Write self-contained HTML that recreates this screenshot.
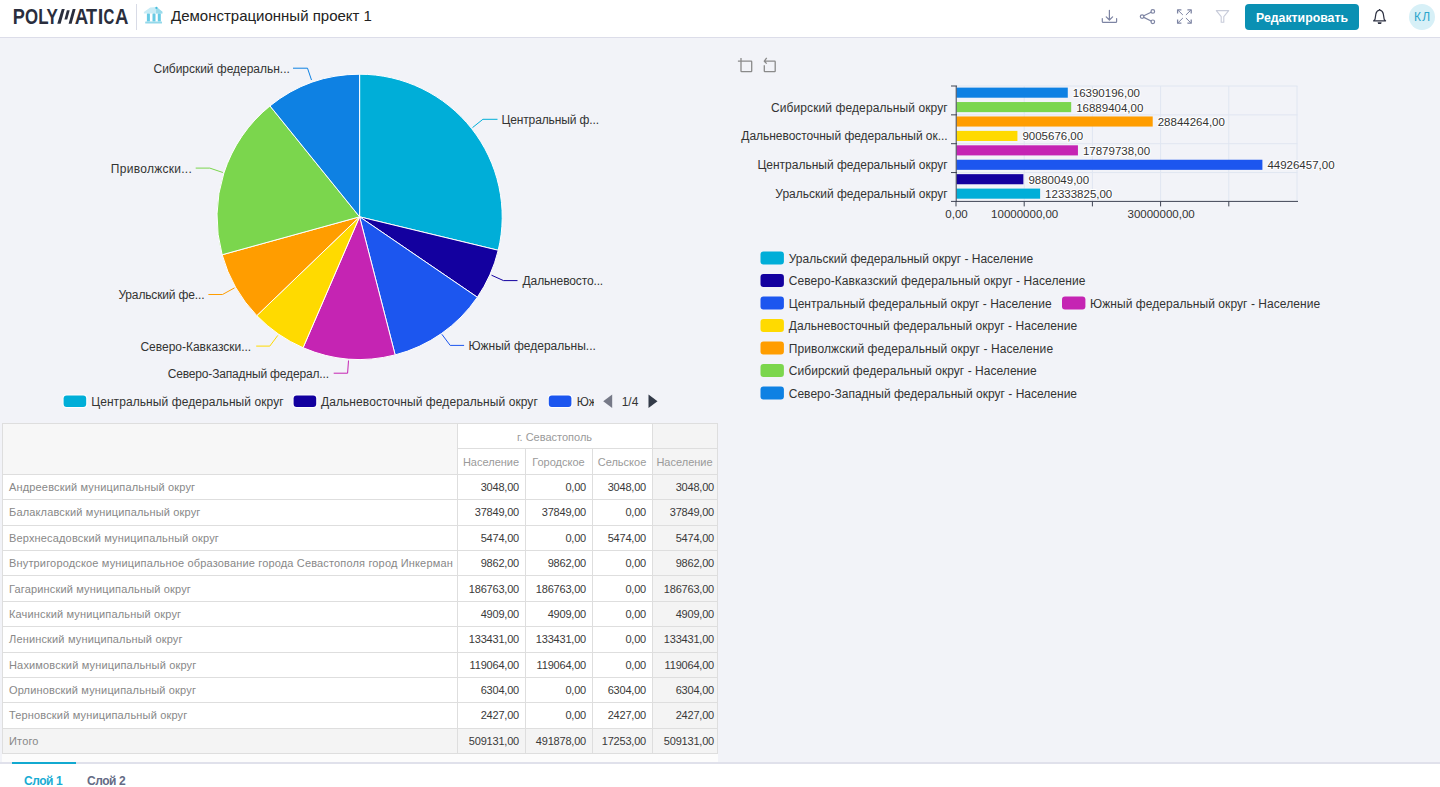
<!DOCTYPE html>
<html><head><meta charset="utf-8"><style>
html,body{margin:0;padding:0;width:1440px;height:787px;overflow:hidden;background:#f2f3f8;font-family:"Liberation Sans", sans-serif}
.abs{position:absolute}
.pl{font-size:12px;fill:#333}
.bv{font-size:11.5px;fill:#333;paint-order:stroke;stroke:#fff;stroke-width:2px;stroke-linejoin:round}
.bl{font-size:12px;fill:#333}
.lg{font-size:12px;fill:#333}
.th{font-size:11px;color:#9a9a9a;white-space:nowrap}
.tl{font-size:11px;letter-spacing:0.16px;color:#888;white-space:nowrap}
.tv{font-size:11px;letter-spacing:-0.2px;color:#3a3a3a;white-space:nowrap}
</style></head><body>
<div class="abs" style="left:0;top:0;width:1440px;height:37px;background:#fff"></div>
<div class="abs" style="left:0;top:37px;width:1440px;height:1px;background:#dcdde9"></div>
<svg class="abs" style="left:0;top:0" width="200" height="37" viewBox="0 0 200 37">
<g fill="#2a2e3d" font-family="Liberation Sans" font-weight="bold" font-size="21.44">
<text transform="translate(12.75,23.75) scale(0.844,1)">P</text>
<text transform="translate(25.11,23.75) scale(0.785,1)">O</text>
<text transform="translate(38.27,23.75) scale(0.791,1)">L</text>
<text transform="translate(46.61,23.75) scale(0.795,1)">Y</text>
<text transform="translate(74.74,23.75) scale(0.869,1)">A</text>
<text transform="translate(86.05,23.75) scale(0.843,1)">T</text>
<text transform="translate(97.65,23.75) scale(0.939,1)">I</text>
<text transform="translate(103.59,23.75) scale(0.699,1)">C</text>
<text transform="translate(114.94,23.75) scale(0.869,1)">A</text>
</g>
<path d="M61.8,9H64.7L60.6,23.75H57.3Z" fill="#2a2e3d"/>
<path d="M66.9,10.2H69.7L67.2,19.4H64.4Z" fill="#2a2e3d"/>
<path d="M72.7,9H75.6L71.6,23.75H68.6Z" fill="#2a2e3d"/>
<rect x="136" y="4" width="1" height="26" fill="#dfe1ea"/>
<path d="M150.2,7.6L157,7L162.4,11.8V13.4H143.9V12Z" fill="#c8ecf6"/>
<path d="M156.2,7.1L162.4,11.8V13.4H156Z" fill="#9adbeb"/>
<circle cx="156.4" cy="7.9" r="1.1" fill="#47bcdc"/>
<rect x="146.9" y="13.4" width="3" height="8.2" rx="0.6" fill="#68cbe5"/>
<rect x="152.5" y="13.4" width="3" height="8.2" rx="0.6" fill="#68cbe5"/>
<rect x="157.8" y="13.4" width="3" height="8.2" rx="0.6" fill="#68cbe5"/>
<rect x="145.2" y="21.4" width="16.8" height="2.2" rx="0.5" fill="#93d8ea"/>
</svg>
<div class="abs" style="left:136px;top:4px;width:1px;height:26px;background:#d8dbe6"></div>
<div class="abs" style="left:171px;top:7px;font-size:15px;color:#222">Демонстрационный проект 1</div>
<div class="abs" style="left:1245px;top:4px;width:114px;height:26px;border-radius:4px;background:#0a90b3;color:#fff;font-size:12.3px;font-weight:bold;line-height:28.5px;text-align:center">Редактировать</div>
<div class="abs" style="left:1409px;top:4px;width:26px;height:26px;border-radius:50%;background:#d7f0f7;color:#2aa5cc;font-size:12px;letter-spacing:1.3px;text-indent:1.3px;line-height:27px;text-align:center">КЛ</div>

<svg class="abs" style="left:0;top:0" width="1440" height="37" viewBox="0 0 1440 37">
 <g fill="none" stroke="#7d84a3" stroke-width="1.2" stroke-linecap="round" stroke-linejoin="round">
  <path d="M1109.4,10.3V20M1106.2,16.8L1109.4,20L1112.6,16.8"/>
  <path d="M1102.3,18.5V21.4Q1102.3,22.4 1103.3,22.4H1115.6Q1116.6,22.4 1116.6,21.4V18.5"/>
  <circle cx="1152.8" cy="11.4" r="1.8"/><circle cx="1142.1" cy="16.6" r="1.8"/><circle cx="1152.8" cy="21.8" r="1.8"/>
  <path d="M1143.8,15.8L1151.1,12.2M1143.8,17.4L1151.1,21"/>
  <path d="M1177.6,13.5V9.8H1181.4M1191.2,13.5V9.8H1187.4M1177.6,19.5V23.2H1181.4M1191.2,19.5V23.2H1187.4" stroke-width="1.3" stroke-linecap="butt"/>
  <path d="M1178.3,10.5L1182.6,14.7M1190.5,10.5L1186.2,14.7M1178.3,22.5L1182.6,18.3M1190.5,22.5L1186.2,18.3" stroke-width="1"/>
 </g>
 <path d="M1216.3,10.6H1228.7L1223.8,16.6V22.3H1221.2V16.6Z" fill="none" stroke="#c8ccda" stroke-width="1.1" stroke-linejoin="round"/>
 <g fill="none" stroke="#2d3142" stroke-width="1.2" stroke-linejoin="round">
  <path d="M1373.6,20.8H1385.6L1384.2,19.4L1383.3,13.8Q1382.8,10.8 1379.6,10Q1376.4,10.8 1375.9,13.8L1375,19.4Z"/>
  <path d="M1379.6,9V10"/>
 </g>
 <g fill="#2d3142">
  <path d="M1377.6,22.3H1381.6L1381.1,23.9H1378.1Z"/>
 </g>
</svg>

<svg class="abs" style="left:0;top:0" width="1440" height="787" viewBox="0 0 1440 787" font-family='"Liberation Sans", sans-serif'>
<path d="M359.6,216.8L359.60,74.20A142.6,142.6 0 0 1 498.22,250.28Z" fill="#00aed8" stroke="#fff" stroke-width="1" stroke-linejoin="round"/>
<path d="M359.6,216.8L498.22,250.28A142.6,142.6 0 0 1 477.35,297.24Z" fill="#13009f" stroke="#fff" stroke-width="1" stroke-linejoin="round"/>
<path d="M359.6,216.8L477.35,297.24A142.6,142.6 0 0 1 395.16,354.90Z" fill="#1c56ef" stroke="#fff" stroke-width="1" stroke-linejoin="round"/>
<path d="M359.6,216.8L395.16,354.90A142.6,142.6 0 0 1 303.09,347.72Z" fill="#c524b3" stroke="#fff" stroke-width="1" stroke-linejoin="round"/>
<path d="M359.6,216.8L303.09,347.72A142.6,142.6 0 0 1 256.80,315.63Z" fill="#ffda00" stroke="#fff" stroke-width="1" stroke-linejoin="round"/>
<path d="M359.6,216.8L256.80,315.63A142.6,142.6 0 0 1 222.15,254.76Z" fill="#ff9d00" stroke="#fff" stroke-width="1" stroke-linejoin="round"/>
<path d="M359.6,216.8L222.15,254.76A142.6,142.6 0 0 1 269.98,105.88Z" fill="#7bd64d" stroke="#fff" stroke-width="1" stroke-linejoin="round"/>
<path d="M359.6,216.8L269.98,105.88A142.6,142.6 0 0 1 359.60,74.20Z" fill="#0e81e3" stroke="#fff" stroke-width="1" stroke-linejoin="round"/>
<path d="M472.5,127.6 L482.9,119.3 L497.5,119.3" fill="none" stroke="#00aed8" stroke-width="1"/>
<text x="501.40" y="124.0" text-anchor="start" class="pl" letter-spacing="-0.113">Центральный ф...</text>
<path d="M491.5,275.2 L503.5,280.6 L517.5,280.6" fill="none" stroke="#13009f" stroke-width="1"/>
<text x="522.60" y="285.4" text-anchor="start" class="pl" letter-spacing="-0.131">Дальневосто...</text>
<path d="M441.9,334.3 L450.2,345.4 L464.1,345.4" fill="none" stroke="#1c56ef" stroke-width="1"/>
<text x="468.40" y="349.6" text-anchor="start" class="pl" letter-spacing="0.011">Южный федеральны...</text>
<path d="M348.5,360.5 L347.6,373.2 L333.7,373.2" fill="none" stroke="#c524b3" stroke-width="1"/>
<text x="328.84" y="377.7" text-anchor="end" class="pl" letter-spacing="-0.160">Северо-Западный федерал...</text>
<path d="M277.8,335.4 L269.8,346.1 L256.2,346.1" fill="none" stroke="#ffda00" stroke-width="1"/>
<text x="251.18" y="350.9" text-anchor="end" class="pl" letter-spacing="-0.017">Северо-Кавказски...</text>
<path d="M234.5,287.9 L222.5,294.5 L208.4,294.5" fill="none" stroke="#ff9d00" stroke-width="1"/>
<text x="204.35" y="298.6" text-anchor="end" class="pl" letter-spacing="-0.154">Уральский фе...</text>
<path d="M222.9,172.5 L209.8,168.1 L195.7,168.1" fill="none" stroke="#7bd64d" stroke-width="1"/>
<text x="192.08" y="173.0" text-anchor="end" class="pl" letter-spacing="0.275">Приволжски...</text>
<path d="M311.5,80 L307.5,68.2 L293,68.2" fill="none" stroke="#0e81e3" stroke-width="1"/>
<text x="289.78" y="72.8" text-anchor="end" class="pl" letter-spacing="-0.024">Сибирский федеральн...</text>
<line x1="1024.2" y1="86" x2="1024.2" y2="201.4" stroke="#e0e6f1" stroke-width="1"/>
<line x1="1092.4" y1="86" x2="1092.4" y2="201.4" stroke="#e0e6f1" stroke-width="1"/>
<line x1="1160.6" y1="86" x2="1160.6" y2="201.4" stroke="#e0e6f1" stroke-width="1"/>
<line x1="1228.8" y1="86" x2="1228.8" y2="201.4" stroke="#e0e6f1" stroke-width="1"/>
<line x1="1297.0" y1="86" x2="1297.0" y2="201.4" stroke="#e0e6f1" stroke-width="1"/>
<line x1="956" y1="86.0" x2="1297.5" y2="86.0" stroke="#e0e6f1" stroke-width="1"/>
<line x1="956" y1="114.85" x2="1297.5" y2="114.85" stroke="#e0e6f1" stroke-width="1"/>
<line x1="956" y1="143.7" x2="1297.5" y2="143.7" stroke="#e0e6f1" stroke-width="1"/>
<line x1="956" y1="172.55" x2="1297.5" y2="172.55" stroke="#e0e6f1" stroke-width="1"/>
<rect x="956.5" y="87.61" width="111.28" height="10.1" fill="#0e81e3"/>
<text x="1072.78" y="97.21" class="bv">16390196,00</text>
<rect x="956.5" y="102.04" width="114.69" height="10.1" fill="#7bd64d"/>
<text x="1076.19" y="111.64" class="bv">16889404,00</text>
<rect x="956.5" y="116.46" width="196.22" height="10.1" fill="#ff9d00"/>
<text x="1157.72" y="126.06" class="bv">28844264,00</text>
<rect x="956.5" y="130.89" width="60.92" height="10.1" fill="#ffda00"/>
<text x="1022.42" y="140.49" class="bv">9005676,00</text>
<rect x="956.5" y="145.31" width="121.44" height="10.1" fill="#c524b3"/>
<text x="1082.94" y="154.91" class="bv">17879738,00</text>
<rect x="956.5" y="159.74" width="305.90" height="10.1" fill="#1c56ef"/>
<text x="1267.40" y="169.34" class="bv">44926457,00</text>
<rect x="956.5" y="174.16" width="66.88" height="10.1" fill="#13009f"/>
<text x="1028.38" y="183.76" class="bv">9880049,00</text>
<rect x="956.5" y="188.59" width="83.62" height="10.1" fill="#00aed8"/>
<text x="1045.12" y="198.19" class="bv">12333825,00</text>
<line x1="956.2" y1="86" x2="956.2" y2="201.4" stroke="#3f4453" stroke-width="1"/>
<line x1="956" y1="201.4" x2="1298" y2="201.4" stroke="#3f4453" stroke-width="1"/>
<line x1="951" y1="86.0" x2="957" y2="86.0" stroke="#3f4453" stroke-width="1"/>
<line x1="951" y1="114.85" x2="957" y2="114.85" stroke="#3f4453" stroke-width="1"/>
<line x1="951" y1="143.7" x2="957" y2="143.7" stroke="#3f4453" stroke-width="1"/>
<line x1="951" y1="172.55" x2="957" y2="172.55" stroke="#3f4453" stroke-width="1"/>
<line x1="951" y1="201.4" x2="957" y2="201.4" stroke="#3f4453" stroke-width="1"/>
<line x1="956.0" y1="201.4" x2="956.0" y2="206.4" stroke="#3f4453" stroke-width="1"/>
<line x1="1024.2" y1="201.4" x2="1024.2" y2="206.4" stroke="#3f4453" stroke-width="1"/>
<line x1="1092.4" y1="201.4" x2="1092.4" y2="206.4" stroke="#3f4453" stroke-width="1"/>
<line x1="1160.6" y1="201.4" x2="1160.6" y2="206.4" stroke="#3f4453" stroke-width="1"/>
<line x1="1228.8" y1="201.4" x2="1228.8" y2="206.4" stroke="#3f4453" stroke-width="1"/>
<text x="947.70" y="198.19" text-anchor="end" class="bl" letter-spacing="0">Уральский федеральный округ</text>
<text x="947.70" y="169.34" text-anchor="end" class="bl" letter-spacing="0">Центральный федеральный округ</text>
<text x="947.67" y="140.49" text-anchor="end" class="bl" letter-spacing="-0.03">Дальневосточный федеральный ок...</text>
<text x="947.79" y="111.64" text-anchor="end" class="bl" letter-spacing="0.09">Сибирский федеральный округ</text>
<text x="956.5" y="217.5" text-anchor="middle" class="bv" style="stroke:none">0,00</text>
<text x="1024.7" y="217.5" text-anchor="middle" class="bv" style="stroke:none">10000000,00</text>
<text x="1161.1" y="217.5" text-anchor="middle" class="bv" style="stroke:none">30000000,00</text>
<rect x="760.5" y="251.6" width="23.4" height="12.8" rx="3" fill="#00aed8"/>
<text x="788.75" y="262.5" class="lg" letter-spacing="0">Уральский федеральный округ - Население</text>
<rect x="760.5" y="274.1" width="23.4" height="12.8" rx="3" fill="#13009f"/>
<text x="788.75" y="285.0" class="lg" letter-spacing="0.064">Северо-Кавказский федеральный округ - Население</text>
<rect x="760.5" y="296.6" width="23.4" height="12.8" rx="3" fill="#1c56ef"/>
<text x="788.75" y="307.5" class="lg" letter-spacing="0.015">Центральный федеральный округ - Население</text>
<rect x="760.5" y="319.1" width="23.4" height="12.8" rx="3" fill="#ffda00"/>
<text x="788.75" y="330.0" class="lg" letter-spacing="0.05">Дальневосточный федеральный округ - Население</text>
<rect x="760.5" y="341.6" width="23.4" height="12.8" rx="3" fill="#ff9d00"/>
<text x="788.75" y="352.5" class="lg" letter-spacing="0.1">Приволжский федеральный округ - Население</text>
<rect x="760.5" y="364.1" width="23.4" height="12.8" rx="3" fill="#7bd64d"/>
<text x="788.75" y="375.0" class="lg" letter-spacing="0.045">Сибирский федеральный округ - Население</text>
<rect x="760.5" y="386.6" width="23.4" height="12.8" rx="3" fill="#0e81e3"/>
<text x="788.75" y="397.5" class="lg" letter-spacing="0.015">Северо-Западный федеральный округ - Население</text>
<rect x="1062" y="296.6" width="23.4" height="12.8" rx="3" fill="#c524b3"/>
<text x="1090" y="307.5" class="lg" letter-spacing="0.06">Южный федеральный округ - Население</text>
<rect x="62.599999999999994" y="394.5" width="24.8" height="13.5" rx="4" fill="#fff"/><rect x="63.599999999999994" y="395.6" width="22.6" height="11.3" rx="3" fill="#00aed8"/>
<text x="91.2" y="405.6" class="lg" letter-spacing="0.08">Центральный федеральный округ</text>
<rect x="292.6" y="394.5" width="24.8" height="13.5" rx="4" fill="#fff"/><rect x="293.6" y="395.6" width="22.6" height="11.3" rx="3" fill="#13009f"/>
<text x="321" y="405.6" class="lg" letter-spacing="0.08">Дальневосточный федеральный округ</text>
<rect x="547.8" y="394.5" width="24.8" height="13.5" rx="4" fill="#fff"/><rect x="548.8" y="395.6" width="22.6" height="11.3" rx="3" fill="#1c56ef"/>
<svg x="576" y="390" width="18" height="20" overflow="hidden"><text x="0.7" y="15.6" class="lg">Южный</text></svg>
<path d="M603.2,401.3L612.2,394.5V408.1Z" fill="#767987"/>
<text x="621.7" y="405.6" class="lg">1/4</text>
<path d="M657.5,401.3L648.5,394.5V408.1Z" fill="#333a48"/>
<g fill="none" stroke="#8a8a8a" stroke-width="1.3" stroke-linejoin="round">
<path d="M741,57.9V71.1Q741,71.7 741.6,71.7H751.1Q751.7,71.7 751.7,71.1V61.8Q751.7,61.2 751.1,61.2H737.9"/>
<path d="M764.3,65.2V71.1Q764.3,71.7 764.9,71.7H774.6Q775.2,71.7 775.2,71.1V61.8Q775.2,61.2 774.6,61.2H764.6M766.7,57.9L764.3,61.2L766.7,63.6"/>
</g>
</svg>
<div class="abs" style="left:3px;top:423px;width:715px;height:330px;background:#fff"></div>
<div class="abs" style="left:3px;top:423px;width:454px;height:51px;background:#f7f7f7"></div>
<div class="abs" style="left:652px;top:423px;width:66px;height:330px;background:#f4f4f4"></div>
<div class="abs" style="left:3px;top:728px;width:715px;height:25px;background:#f4f4f4"></div>
<div class="abs" style="left:3px;top:423px;width:715px;height:1px;background:#dedede"></div>
<div class="abs" style="left:457px;top:448px;width:261px;height:1px;background:#dedede"></div>
<div class="abs" style="left:3px;top:474px;width:715px;height:1px;background:#dedede"></div>
<div class="abs" style="left:3px;top:499px;width:715px;height:1px;background:#dedede"></div>
<div class="abs" style="left:3px;top:525px;width:715px;height:1px;background:#dedede"></div>
<div class="abs" style="left:3px;top:550px;width:715px;height:1px;background:#dedede"></div>
<div class="abs" style="left:3px;top:575px;width:715px;height:1px;background:#dedede"></div>
<div class="abs" style="left:3px;top:601px;width:715px;height:1px;background:#dedede"></div>
<div class="abs" style="left:3px;top:626px;width:715px;height:1px;background:#dedede"></div>
<div class="abs" style="left:3px;top:652px;width:715px;height:1px;background:#dedede"></div>
<div class="abs" style="left:3px;top:677px;width:715px;height:1px;background:#dedede"></div>
<div class="abs" style="left:3px;top:702px;width:715px;height:1px;background:#dedede"></div>
<div class="abs" style="left:3px;top:728px;width:715px;height:1px;background:#dedede"></div>
<div class="abs" style="left:3px;top:753px;width:715px;height:1px;background:#dedede"></div>
<div class="abs" style="left:2px;top:423px;width:1px;height:331px;background:#dedede"></div>
<div class="abs" style="left:717px;top:423px;width:1px;height:331px;background:#dedede"></div>
<div class="abs" style="left:457px;top:423px;width:1px;height:331px;background:#dedede"></div>
<div class="abs" style="left:652px;top:423px;width:1px;height:331px;background:#dedede"></div>
<div class="abs" style="left:525px;top:448px;width:1px;height:306px;background:#dedede"></div>
<div class="abs" style="left:592px;top:448px;width:1px;height:306px;background:#dedede"></div>
<div class="abs th" style="left:457px;top:423px;width:195px;height:25px;line-height:28.4px;text-align:center">г. Севастополь</div>
<div class="abs th" style="left:457px;top:448px;width:68px;height:26px;line-height:28px;text-align:center">Население</div>
<div class="abs th" style="left:525px;top:448px;width:67px;height:26px;line-height:28px;text-align:center">Городское</div>
<div class="abs th" style="left:592px;top:448px;width:60px;height:26px;line-height:28px;text-align:center">Сельское</div>
<div class="abs th" style="left:652px;top:448px;width:65px;height:26px;line-height:28px;text-align:center">Население</div>
<div class="abs tl" style="left:9px;top:474.0px;height:25px;line-height:26px">Андреевский муниципальный округ</div>
<div class="abs tv" style="left:457px;top:474.0px;width:62px;height:25px;line-height:26px;text-align:right">3048,00</div>
<div class="abs tv" style="left:525px;top:474.0px;width:61px;height:25px;line-height:26px;text-align:right">0,00</div>
<div class="abs tv" style="left:592px;top:474.0px;width:54px;height:25px;line-height:26px;text-align:right">3048,00</div>
<div class="abs tv" style="left:652px;top:474.0px;width:62px;height:25px;line-height:26px;text-align:right">3048,00</div>
<div class="abs tl" style="left:9px;top:499.4px;height:25px;line-height:26px">Балаклавский муниципальный округ</div>
<div class="abs tv" style="left:457px;top:499.4px;width:62px;height:25px;line-height:26px;text-align:right">37849,00</div>
<div class="abs tv" style="left:525px;top:499.4px;width:61px;height:25px;line-height:26px;text-align:right">37849,00</div>
<div class="abs tv" style="left:592px;top:499.4px;width:54px;height:25px;line-height:26px;text-align:right">0,00</div>
<div class="abs tv" style="left:652px;top:499.4px;width:62px;height:25px;line-height:26px;text-align:right">37849,00</div>
<div class="abs tl" style="left:9px;top:524.7px;height:25px;line-height:26px">Верхнесадовский муниципальный округ</div>
<div class="abs tv" style="left:457px;top:524.7px;width:62px;height:25px;line-height:26px;text-align:right">5474,00</div>
<div class="abs tv" style="left:525px;top:524.7px;width:61px;height:25px;line-height:26px;text-align:right">0,00</div>
<div class="abs tv" style="left:592px;top:524.7px;width:54px;height:25px;line-height:26px;text-align:right">5474,00</div>
<div class="abs tv" style="left:652px;top:524.7px;width:62px;height:25px;line-height:26px;text-align:right">5474,00</div>
<div class="abs tl" style="left:9px;top:550.1px;height:25px;line-height:26px">Внутригородское муниципальное образование города Севастополя город Инкерман</div>
<div class="abs tv" style="left:457px;top:550.1px;width:62px;height:25px;line-height:26px;text-align:right">9862,00</div>
<div class="abs tv" style="left:525px;top:550.1px;width:61px;height:25px;line-height:26px;text-align:right">9862,00</div>
<div class="abs tv" style="left:592px;top:550.1px;width:54px;height:25px;line-height:26px;text-align:right">0,00</div>
<div class="abs tv" style="left:652px;top:550.1px;width:62px;height:25px;line-height:26px;text-align:right">9862,00</div>
<div class="abs tl" style="left:9px;top:575.5px;height:25px;line-height:26px">Гагаринский муниципальный округ</div>
<div class="abs tv" style="left:457px;top:575.5px;width:62px;height:25px;line-height:26px;text-align:right">186763,00</div>
<div class="abs tv" style="left:525px;top:575.5px;width:61px;height:25px;line-height:26px;text-align:right">186763,00</div>
<div class="abs tv" style="left:592px;top:575.5px;width:54px;height:25px;line-height:26px;text-align:right">0,00</div>
<div class="abs tv" style="left:652px;top:575.5px;width:62px;height:25px;line-height:26px;text-align:right">186763,00</div>
<div class="abs tl" style="left:9px;top:600.8px;height:25px;line-height:26px">Качинский муниципальный округ</div>
<div class="abs tv" style="left:457px;top:600.8px;width:62px;height:25px;line-height:26px;text-align:right">4909,00</div>
<div class="abs tv" style="left:525px;top:600.8px;width:61px;height:25px;line-height:26px;text-align:right">4909,00</div>
<div class="abs tv" style="left:592px;top:600.8px;width:54px;height:25px;line-height:26px;text-align:right">0,00</div>
<div class="abs tv" style="left:652px;top:600.8px;width:62px;height:25px;line-height:26px;text-align:right">4909,00</div>
<div class="abs tl" style="left:9px;top:626.2px;height:25px;line-height:26px">Ленинский муниципальный округ</div>
<div class="abs tv" style="left:457px;top:626.2px;width:62px;height:25px;line-height:26px;text-align:right">133431,00</div>
<div class="abs tv" style="left:525px;top:626.2px;width:61px;height:25px;line-height:26px;text-align:right">133431,00</div>
<div class="abs tv" style="left:592px;top:626.2px;width:54px;height:25px;line-height:26px;text-align:right">0,00</div>
<div class="abs tv" style="left:652px;top:626.2px;width:62px;height:25px;line-height:26px;text-align:right">133431,00</div>
<div class="abs tl" style="left:9px;top:651.5px;height:25px;line-height:26px">Нахимовский муниципальный округ</div>
<div class="abs tv" style="left:457px;top:651.5px;width:62px;height:25px;line-height:26px;text-align:right">119064,00</div>
<div class="abs tv" style="left:525px;top:651.5px;width:61px;height:25px;line-height:26px;text-align:right">119064,00</div>
<div class="abs tv" style="left:592px;top:651.5px;width:54px;height:25px;line-height:26px;text-align:right">0,00</div>
<div class="abs tv" style="left:652px;top:651.5px;width:62px;height:25px;line-height:26px;text-align:right">119064,00</div>
<div class="abs tl" style="left:9px;top:676.9px;height:25px;line-height:26px">Орлиновский муниципальный округ</div>
<div class="abs tv" style="left:457px;top:676.9px;width:62px;height:25px;line-height:26px;text-align:right">6304,00</div>
<div class="abs tv" style="left:525px;top:676.9px;width:61px;height:25px;line-height:26px;text-align:right">0,00</div>
<div class="abs tv" style="left:592px;top:676.9px;width:54px;height:25px;line-height:26px;text-align:right">6304,00</div>
<div class="abs tv" style="left:652px;top:676.9px;width:62px;height:25px;line-height:26px;text-align:right">6304,00</div>
<div class="abs tl" style="left:9px;top:702.3px;height:25px;line-height:26px">Терновский муниципальный округ</div>
<div class="abs tv" style="left:457px;top:702.3px;width:62px;height:25px;line-height:26px;text-align:right">2427,00</div>
<div class="abs tv" style="left:525px;top:702.3px;width:61px;height:25px;line-height:26px;text-align:right">0,00</div>
<div class="abs tv" style="left:592px;top:702.3px;width:54px;height:25px;line-height:26px;text-align:right">2427,00</div>
<div class="abs tv" style="left:652px;top:702.3px;width:62px;height:25px;line-height:26px;text-align:right">2427,00</div>
<div class="abs tl" style="left:9px;top:727.6px;height:25px;line-height:26px">Итого</div>
<div class="abs tv" style="left:457px;top:727.6px;width:62px;height:25px;line-height:26px;text-align:right">509131,00</div>
<div class="abs tv" style="left:525px;top:727.6px;width:61px;height:25px;line-height:26px;text-align:right">491878,00</div>
<div class="abs tv" style="left:592px;top:727.6px;width:54px;height:25px;line-height:26px;text-align:right">17253,00</div>
<div class="abs tv" style="left:652px;top:727.6px;width:62px;height:25px;line-height:26px;text-align:right">509131,00</div>
<div class="abs" style="left:2px;top:754px;width:716px;height:8px;background:#fcfcfc"></div>
<div class="abs" style="left:0;top:762px;width:1440px;height:25px;background:#fff"></div>
<div class="abs" style="left:0;top:762px;width:1440px;height:2px;background:#e0e1eb"></div>
<div class="abs" style="left:12px;top:762px;width:64px;height:2px;background:#12a9d0"></div>
<div class="abs" style="left:24px;top:774px;font-size:12px;font-weight:bold;letter-spacing:-0.45px;color:#19acd3">Слой 1</div>
<div class="abs" style="left:87px;top:774px;font-size:12px;font-weight:bold;letter-spacing:-0.45px;color:#646b85">Слой 2</div>
</body></html>
